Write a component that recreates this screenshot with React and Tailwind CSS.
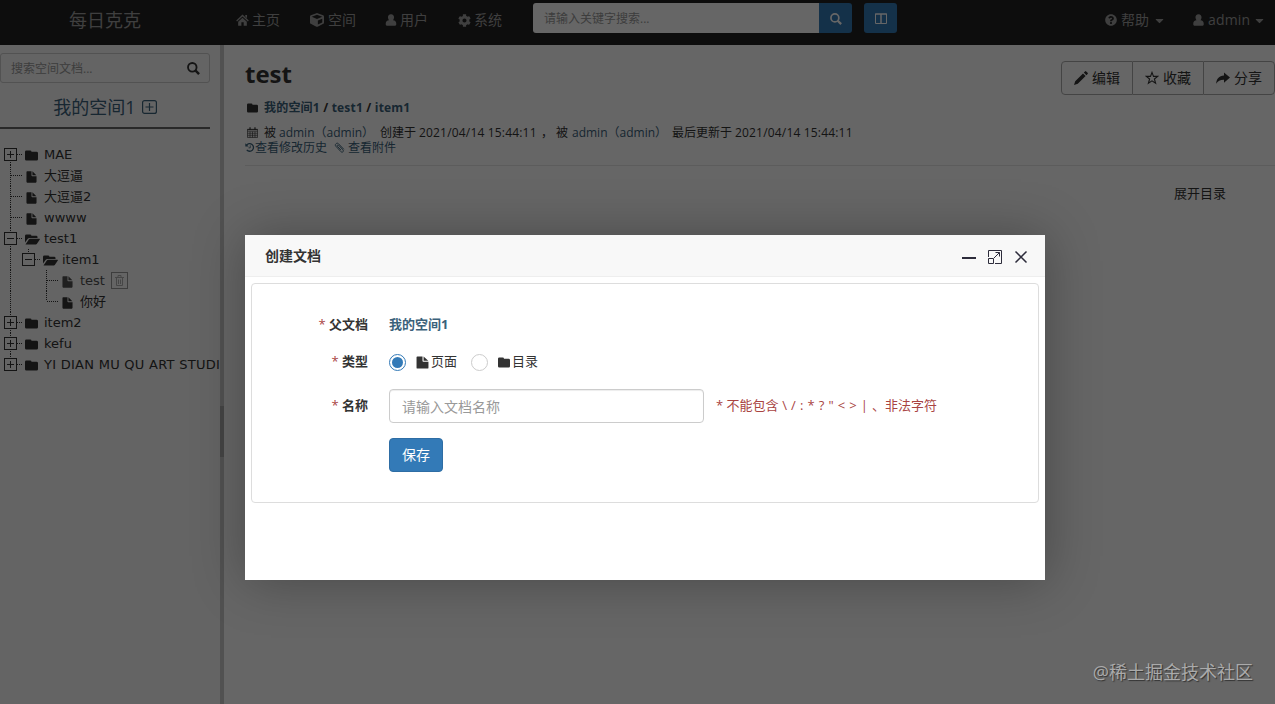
import { FaCube, FaCog, FaQuestionCircle, FaCaretDown } from "react-icons/fa";

const HomeIcon = ({ className }) => (
  <svg viewBox="0 0 14 13" fill="currentColor" className={className}>
    <path d="M7 .5 13.800 7l-.9 1L7 2.600 1.100 8l-.9-1zM2.300 8.300 7 4l4.700 4.300v4.300H8.300V9H5.800v3.600H2.300zM10 1h1.900v3.600L10 2.800z" />
  </svg>
);

const UserIcon = ({ className }) => (
  <svg viewBox="0 0 12 13" fill="currentColor" className={className}>
    <path d="M6 .3c2.200 0 3.400 1.500 3.300 3.500-.1 1.300-.5 2.300-1.100 3 2.200.3 3.500 1.500 3.500 3.400v1.300q0 1.200-1.200 1.200h-9Q.3 12.700.3 11.500v-1.300c0-1.900 1.300-3.100 3.500-3.400-.6-.7-1-1.700-1.100-3C2.600 1.800 3.800.3 6 .3z" />
  </svg>
);

const SearchIcon = ({ className }) => (
  <svg viewBox="0 0 14 14" fill="none" stroke="currentColor" className={className}>
    <circle cx="5.700" cy="5.700" r="4.600" strokeWidth="2" />
    <path d="m9 9 4 4" strokeWidth="2.600" />
  </svg>
);

const FolderIcon = ({ className }) => (
  <svg viewBox="0 0 14 12" fill="currentColor" className={className} preserveAspectRatio="none">
    <path d="M0 2Q0 .5 1.500.5h4Q7 .5 7 2h5.500Q14 2 14 3.500v6.500q0 1.500-1.500 1.500h-11Q0 11.500 0 10z" />
  </svg>
);

const FolderOpenIcon = ({ className }) => (
  <svg viewBox="0 0 15 12" fill="currentColor" className={className} preserveAspectRatio="none">
    <path d="M0 9.400V2Q0 .5 1.500.5H5Q6.400.5 6.400 2h4.800q1.300 0 1.300 1.300v1H4.600q-1 0-1.600.7z" />
    <path d="M.5 11.500 4 5.800q.4-.5 1-.5h9.500q.7 0 .3.600l-3 5.100q-.4.500-1 .5z" />
  </svg>
);

const FileIcon = ({ className }) => (
  <svg viewBox="0 0 12 13" fill="currentColor" className={className} preserveAspectRatio="none">
    <path d="M.5 1.200Q.5.400 1.300.400H6v4.500q0 .8.800.8h4.700v6q0 .9-.8.9H1.300q-.8 0-.8-.9zM7 .4l4.300 4.300H7z" />
  </svg>
);

const CalendarIcon = ({ className }) => (
  <svg viewBox="0 0 12 12" fill="none" stroke="currentColor" className={className}>
    <path d="M.5 2.500h11v9H.5zM.5 5.200h11M.5 7.400h11M.5 9.500h11M3.300 5v6.500M6 5v6.500M8.700 5v6.500" strokeWidth=".7" />
    <path d="M.5 3h11M3.300.4v3M8.700.4v3" strokeWidth="1.300" />
  </svg>
);

const HistoryIcon = ({ className }) => (
  <svg viewBox="0 0 12 12" fill="none" stroke="currentColor" className={className}>
    <path d="M1.700 3.500a4.600 4.600 0 1 1 .4 5.400" strokeWidth="1.600" />
    <path d="M.4.800v4h4z" fill="currentColor" stroke="none" />
    <path d="M6.300 3.400v3H4.200" />
  </svg>
);

const ClipIcon = ({ className }) => (
  <svg viewBox="0 0 12 12" fill="none" stroke="currentColor" className={className}>
    <path d="M10.800 8 4.700 1.700C3.200.3.300 2.800 1.900 4.500l5.600 6c1.600 1.600 3.700-.3 2.300-1.900L5 3.500C4 2.500 2.800 3.700 3.800 4.800l3.800 4" strokeWidth="1" />
  </svg>
);

const PencilIcon = ({ className }) => (
  <svg viewBox="0 0 14 14" fill="currentColor" className={className}>
    <path d="M0 14 1.200 10.200 9 2.400 11.600 5 3.800 12.800zM9.800 1.600 11 .4q.6-.6 1.200 0L13.600 1.800q.6.600 0 1.200L12.400 4.200z" />
  </svg>
);

const StarIcon = ({ className }) => (
  <svg viewBox="0 0 14 14" fill="none" stroke="currentColor" strokeWidth="1.100" className={className}>
    <path d="m7 1.400 1.500 4h4.200L9.400 8l1.200 4.300L7 9.800l-3.600 2.500L4.600 8 1.300 5.400h4.200z" />
  </svg>
);

const ShareIcon = ({ className }) => (
  <svg viewBox="0 0 14 13" fill="currentColor" className={className}>
    <path d="M8 .5 14 5.600 8 10.800V7.700C4.400 7.600 1.800 8.800.2 11.800.4 7 3 3.700 8 3.500z" />
  </svg>
);

const tree = [
  { name: "MAE", lines: [], kind: "closed", top: false },
  { name: "大逗逼", kind: "file", lines: [] },
  { name: "大逗逼2", kind: "file", lines: [] },
  { name: "wwww", kind: "file", lines: [] },
  { name: "test1", kind: "open", lines: [] },
  { name: "item1", kind: "open", lines: [true], bottom: false },
  { name: "test", kind: "file", lines: [true, false], active: true },
  { name: "你好", kind: "file", lines: [true, false], bottom: false },
  { name: "item2", kind: "closed", lines: [] },
  { name: "kefu", kind: "closed", lines: [] },
  { name: "YI DIAN MU QU ART STUDI", kind: "closed", lines: [], bottom: false },
];

// One 18px wide cell of the tree: connector lines and the +/- box
const TreeCell = ({ kind, top = true, bottom = true }) => (
  <svg width="18" height="21" viewBox="0 0 18 21" className="shrink-0 overflow-visible" fill="none" stroke="#333">
    <g strokeDasharray="1 1">
      {top && <path d="M9.500 0V10" />}
      {bottom && <path d="M9.500 10V21" />}
      {kind && <path d="M10 10.500H21" />}
    </g>
    {kind && kind !== "file" && (
      <>
        <rect x="3.500" y="4.500" width="12" height="12" fill="#fafafa" />
        <path d={kind === "open" ? "M6 10.500h7" : "M6 10.500h7M9.500 7v7"} />
      </>
    )}
  </svg>
);

const TreeRow = ({ node }) => (
  <li className="flex h-[21px] items-center whitespace-nowrap last:tracking-[0.27px]">
    {node.lines.map((on, i) =>
      on ? <TreeCell key={i} /> : <span key={i} className="w-[18px] shrink-0" />
    )}
    <TreeCell kind={node.kind} top={node.top} bottom={node.bottom} />
    <span className={node.active ? "ml-1.5 flex items-center opacity-85" : "ml-1.5 flex items-center"}>
      <span className="flex w-[19px] shrink-0 pt-[2px]">
        {node.kind === "closed" && <FolderIcon className="h-[11px] w-[13px]" />}
        {node.kind === "open" && <FolderOpenIcon className="h-[11px] w-[15px]" />}
        {node.kind === "file" && <FileIcon className="ml-px h-[12px] w-[11px]" />}
      </span>
      {node.name}
    </span>
    {node.active && (
      <span className="ml-[6px] flex h-[17px] w-[17px] items-center justify-center border border-[#999] text-[#b0b0b0]">
        <svg width="9" height="11" viewBox="0 0 9 11" fill="none" stroke="currentColor">
          <path d="M0 2.500h9M3 2V.5h3V2M1.500 3v7.500h6V3M3.500 4.500V9M5.500 4.500V9" />
        </svg>
      </span>
    )}
  </li>
);

const Navbar = () => (
  <nav className="flex h-[45px] items-start bg-[#222] text-sm text-[#9d9d9d]">
    <div className="flex h-10 w-[236px] items-center pl-[69px] text-lg">每日克克</div>
    <div className="flex h-10 w-[74px] items-center">
      <HomeIcon className="mr-[3px] h-[12px] w-[13px]" />主页
    </div>
    <div className="flex h-10 w-[75px] items-center">
      <FaCube className="mr-1 h-[14px] w-[14px]" />空间
    </div>
    <div className="flex h-10 w-[73px] items-center">
      <UserIcon className="mr-[3px] h-[12px] w-[12px]" />用户
    </div>
    <div className="flex h-10 w-[75px] items-center">
      <FaCog className="mr-[3px] h-[13px] w-[13px]" />系统
    </div>
    <div className="mt-[3px] flex h-[30px]">
      <div className="flex w-[286px] items-center rounded-l-[3px] bg-white pt-[2px] pl-[11px] text-xs text-[#999]">
        请输入关键字搜索...
      </div>
      <button className="flex w-[33px] items-center justify-center rounded-r-[3px] bg-[#337ab7] pt-px text-white">
        <SearchIcon className="h-[12px] w-[12px]" />
      </button>
      <button className="ml-3 flex w-[33px] items-center justify-center rounded-[3px] bg-[#337ab7] text-white">
        <svg width="12" height="11" viewBox="0 0 12 11" fill="none" stroke="currentColor">
          <path d="M.5 1h11v9.500H.5zM0 1h12" />
          <path d="M6 1v10" strokeWidth="1.500" />
        </svg>
      </button>
    </div>
    <div className="ml-[208px] flex h-10 w-[88px] items-center">
      <FaQuestionCircle className="mr-1 h-[12px] w-[12px]" />帮助
      <FaCaretDown className="ml-1 h-[13px] w-[13px]" />
    </div>
    <div className="flex h-10 items-center">
      <UserIcon className="mr-1 h-[12px] w-[11px]" />
      <span className="w-[45px] tracking-[0.15px]">admin</span>
      <FaCaretDown className="h-[13px] w-[13px]" />
    </div>
  </nav>
);

const Sidebar = () => (
  <aside className="w-[220px] shrink-0 overflow-hidden bg-[#fafafa]">
    <div className="mt-2 flex h-[30px] w-[210px] items-center justify-between rounded-[3px] border border-[#ccc] pr-[9px] pl-[10px] text-xs text-[#999]">
      <span className="pt-[2px]">搜索空间文档...</span>
      <SearchIcon className="h-[13px] w-[13px] text-[#333]" />
    </div>
    <div className="flex h-[46px] w-[210px] items-center justify-center border-b-2 border-[#666] pt-1 text-lg text-[#3a617a]">
      我的空间1
      <svg width="15" height="14" viewBox="0 0 15 14" fill="none" stroke="currentColor" className="ml-1.5">
        <rect x=".6" y=".6" width="13.800" height="12.800" rx="2" strokeWidth="1.200" />
        <path d="M3.500 7h8M7.500 3v8" strokeWidth="1.200" />
      </svg>
    </div>
    <ul className="mt-[15px] ml-px font-['DejaVu_Sans','Noto_Sans_CJK_SC',sans-serif] text-[13px] leading-[21px]">
      {tree.map((node) => (
        <TreeRow key={node.name} node={node} />
      ))}
    </ul>
  </aside>
);

const Author = () => <span className="w-[101px] text-[#3a617a]">admin（admin）</span>;

const Content = () => (
  <main className="min-w-0 flex-1 bg-white pl-[21px]">
    <div className="flex justify-between">
      <div>
        <h1 className="mt-[12px] text-2xl leading-[34px] font-bold">test</h1>
        <div className="mt-2 flex h-[18px] items-center text-xs font-bold tracking-[0.2px] whitespace-pre text-[#3a617a]">
          <FolderIcon className="mr-[6px] ml-[2px] h-[10px] w-[11px] text-[#333]" />
          我的空间1<span className="text-[#333]"> / </span>test1<span className="text-[#333]"> / </span>item1
        </div>
      </div>
      <div className="mt-4 flex h-[34px] text-sm">
        <button className="flex w-[72px] items-center justify-center rounded-l border border-[#aaa]">
          <PencilIcon className="mr-1 h-[14px] w-[14px]" />编辑
        </button>
        <button className="flex w-[70px] items-center justify-center border-y border-[#aaa]">
          <StarIcon className="mr-1 h-[14px] w-[14px]" />收藏
        </button>
        <button className="flex w-[72px] items-center justify-center rounded-r border border-[#aaa]">
          <ShareIcon className="mr-1 h-[13px] w-[14px]" />分享
        </button>
      </div>
    </div>
    <div className="mt-[8px] flex h-[15px] items-center text-xs whitespace-nowrap">
      <CalendarIcon className="mr-[6px] ml-[2px] h-[11px] w-[11px]" />
      <span className="w-[15px]">被</span>
      <Author />
      <span className="w-[39px]">创建于</span>
      <span className="w-[120px] tracking-[0.18px]">2021/04/14 15:44:11</span>
      <span className="w-[17px] pl-[2px]">，</span>
      <span className="w-[16px]">被</span>
      <Author />
      <span className="w-[62px] -ml-px mr-px">最后更新于</span>
      <span className="tracking-[0.18px]">2021/04/14 15:44:11</span>
    </div>
    <div className="flex h-[15px] items-center text-xs text-[#3a617a]">
      <HistoryIcon className="h-[11px] w-[10px]" />查看修改历史
      <ClipIcon className="mr-[3px] ml-[7px] h-[11px] w-[11px]" />查看附件
    </div>
    <div className="mt-[10px] border-t border-[#e5e5e5]" />
    <div className="mt-[17px] pr-[49px] text-right text-[13px] leading-5">展开目录</div>
  </main>
);

const Label = ({ children }) => (
  <label className="w-[116px] text-right text-[13px] font-bold">
    <span className="font-normal text-[#a94442]">* </span>
    {children}
  </label>
);

const Modal = () => (
  <div className="absolute top-[235px] left-[245px] h-[345px] w-[800px] bg-white text-[#333] shadow-[1px_1px_50px_rgba(0,0,0,0.3)]">
    <div className="flex h-[42px] items-center border-b border-[#eee] bg-[#f8f8f8] pr-[17px] pl-5">
      <h2 className="flex-1 text-sm font-bold">创建文档</h2>
      <div className="mt-[3px] flex items-center gap-3">
        <svg width="14" height="14" viewBox="0 0 14 14" stroke="#2d2c3b">
          <path d="M0 8h14" strokeWidth="2" />
        </svg>
        <svg width="14" height="14" viewBox="0 0 14 14" fill="none" stroke="#2d2c3b">
          <path d="M.5 7V.5h13v13H7M.5 8.500h5v5h-5zM6 8l5.500-5.500M7.500 2.500h4v4" />
        </svg>
        <svg width="14" height="14" viewBox="0 0 14 14" stroke="#2d2c3b">
          <path d="m1.500 1.500 11 11m0-11-11 11" strokeWidth="1.500" />
        </svg>
      </div>
    </div>
    <form className="mx-1.5 mt-1.5 h-[220px] rounded border border-[#ddd] pt-[29px]">
      <div className="flex h-6 items-center">
        <Label>父文档</Label>
        <span className="ml-[21px] text-[13px] font-bold text-[#3a617a]">我的空间1</span>
      </div>
      <div className="mt-[13px] flex h-6 items-center text-[13px]">
        <Label>类型</Label>
        <span className="ml-[21px] flex h-[17px] w-[17px] items-center justify-center rounded-full border border-[#337ab7]">
          <span className="h-[11px] w-[11px] rounded-full bg-[#337ab7]" />
        </span>
        <FileIcon className="mr-[2px] ml-[10px] h-[13px] w-[13px]" />页面
        <span className="ml-[14px] h-[17px] w-[17px] rounded-full border border-[#ccc]" />
        <FolderIcon className="mr-[2px] ml-[10px] h-[11px] w-[12px]" />目录
      </div>
      <div className="mt-[15px] flex h-[34px] items-center pb-px">
        <Label>名称</Label>
        <input
          type="text"
          placeholder="请输入文档名称"
          className="mt-px ml-[21px] h-[34px] w-[315px] shrink-0 rounded border border-[#ccc] px-3 text-sm shadow-[inset_0_1px_1px_rgba(0,0,0,0.075)] placeholder:text-[#999]"
        />
        <span className="ml-3 text-[13px] text-[#a94442]">
          * 不能包含<span className="tracking-[0.35px]"> \ / : * ? " &lt; &gt; | </span>、非法字符
        </span>
      </div>
      <button type="button" className="mt-[15px] ml-[137px] h-[34px] w-[54px] rounded border border-[#2e6da4] bg-[#337ab7] text-sm text-white">
        保存
      </button>
    </form>
  </div>
);

const App = () => {
  return (
    <div className="relative flex h-[704px] w-[1275px] flex-col overflow-hidden bg-white font-['Open_Sans','Noto_Sans_CJK_SC',sans-serif] text-[#333]">
      <Navbar />
      <div className="flex min-h-0 flex-1">
        <Sidebar />
        <div className="w-1 shrink-0 bg-[#cacaca] pt-[361px]">
          <div className="h-[51px] bg-[#aaa]" />
        </div>
        <Content />
      </div>
      <div className="absolute inset-0 bg-black/60" />
      <Modal />
      <div className="absolute right-[22px] bottom-[18px] text-lg text-[#aaa] [text-shadow:1px_1px_1px_#333]">
        @稀土掘金技术社区
      </div>
    </div>
  );
};

export default App;
